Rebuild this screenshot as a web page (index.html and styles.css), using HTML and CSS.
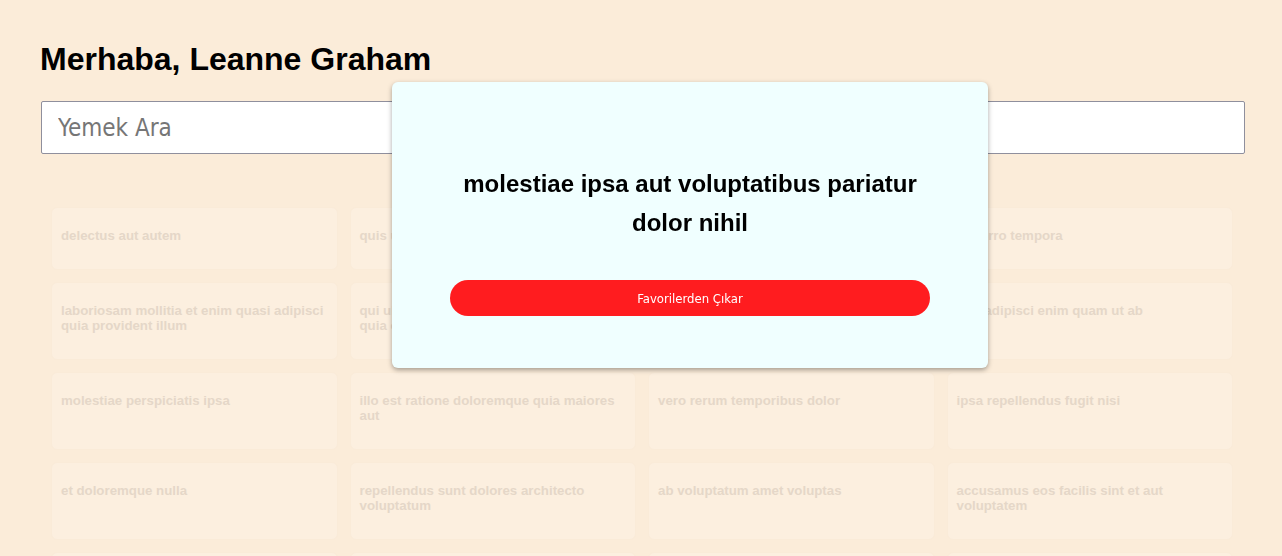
FILE: index.html
```html
<!DOCTYPE html>
<html lang="tr">
<head>
<meta charset="utf-8">
<title>Yemekler</title>
<link rel="stylesheet" href="styles.css">
</head>
<body>
<main class="page">
  <h1 class="greeting">Merhaba, Leanne Graham</h1>
  <input class="search" type="text" placeholder="Yemek Ara">
  <section class="grid">
    <article class="card"><h5 class="card-title">delectus aut autem</h5></article>
    <article class="card"><h5 class="card-title">quis ut nam facilis et officia qui</h5></article>
    <article class="card"><h5 class="card-title">fugiat veniam minus</h5></article>
    <article class="card"><h5 class="card-title">et porro tempora</h5></article>
    <article class="card"><h5 class="card-title">laboriosam mollitia et enim quasi adipisci quia provident illum</h5></article>
    <article class="card"><h5 class="card-title">qui ullam ratione quibusdam voluptatem quia omnis</h5></article>
    <article class="card"><h5 class="card-title">illo expedita consequatur quia in</h5></article>
    <article class="card"><h5 class="card-title">quo adipisci enim quam ut ab</h5></article>
    <article class="card"><h5 class="card-title">molestiae perspiciatis ipsa</h5></article>
    <article class="card"><h5 class="card-title">illo est ratione doloremque quia maiores aut</h5></article>
    <article class="card"><h5 class="card-title">vero rerum temporibus dolor</h5></article>
    <article class="card"><h5 class="card-title">ipsa repellendus fugit nisi</h5></article>
    <article class="card"><h5 class="card-title">et doloremque nulla</h5></article>
    <article class="card"><h5 class="card-title">repellendus sunt dolores architecto voluptatum</h5></article>
    <article class="card"><h5 class="card-title">ab voluptatum amet voluptas</h5></article>
    <article class="card"><h5 class="card-title">accusamus eos facilis sint et aut voluptatem</h5></article>
    <article class="card"><h5 class="card-title">quo laboriosam deleniti aut qui</h5></article>
    <article class="card"><h5 class="card-title">dolorum est consequatur ea mollitia in culpa</h5></article>
    <article class="card"><h5 class="card-title">molestiae ipsa aut voluptatibus pariatur dolor nihil</h5></article>
    <article class="card"><h5 class="card-title">ullam nobis libero sapiente ad optio sint</h5></article>
  </section>
</main>
<div class="modal" role="dialog">
  <h2 class="modal-title">molestiae ipsa aut voluptatibus pariatur dolor nihil</h2>
  <button class="modal-button" type="button">Favorilerden Çıkar</button>
</div>
</body>
</html>
```

FILE: styles.css
```css
html, body {
  margin: 0;
  padding: 0;
  overflow: hidden;
}

body {
  background: #FBECD9;
  font-family: "Liberation Sans", Arial, sans-serif;
  color: #000;
}

.page {
  padding: 41px 37px 0 40px;
}

.greeting {
  margin: 0;
  font-size: 32px;
  font-weight: bold;
  line-height: 37px;
}

.search {
  display: block;
  box-sizing: border-box;
  width: calc(100% - 1px);
  height: 53px;
  margin: 23px 0 0 1px;
  padding: 0 16px;
  border: 1px solid #8f8f9d;
  border-radius: 2px;
  background: #fff;
  font-family: "DejaVu Sans Condensed", "DejaVu Sans", sans-serif;
  font-stretch: condensed;
  font-size: 24px;
  color: #333;
  outline: none;
}

.search::placeholder {
  color: #767676;
}

.grid {
  display: grid;
  grid-template-columns: repeat(4, 1fr);
  gap: 12px;
  margin: 53px 12px 0 11px;
}

.card {
  box-sizing: border-box;
  padding: 20px 9px 26px;
  background: #FCEFDF;
  border: 1px solid #FAEBD8;
  border-radius: 6px;
}

.card-title {
  margin: 0;
  font-size: 13.28px;
  font-weight: bold;
  line-height: 15px;
  color: #E5D7C8;
}

.modal {
  position: fixed;
  left: 392px;
  top: 82px;
  width: 596px;
  height: 286px;
  box-sizing: border-box;
  padding: 82px 58px 0;
  display: flex;
  flex-direction: column;
  align-items: stretch;
  background: #F0FFFF;
  border-radius: 6px;
  box-shadow: 0 2px 5px rgba(0, 0, 0, 0.35);
}

.modal-title {
  margin: 0;
  font-size: 24px;
  font-weight: bold;
  line-height: 39px;
  text-align: center;
}

.modal-button {
  margin-top: 38px;
  height: 36px;
  border: none;
  border-radius: 18px;
  background: #FF1C1F;
  color: #fff;
  font-family: "DejaVu Sans Condensed", "DejaVu Sans", sans-serif;
  font-stretch: condensed;
  font-size: 13px;
  cursor: pointer;
}
```
